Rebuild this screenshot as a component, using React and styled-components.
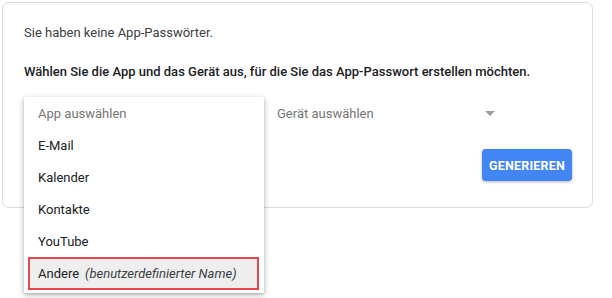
import React from "react";
import styled, { createGlobalStyle } from "styled-components";

const GlobalStyle = createGlobalStyle`
  html, body {
    margin: 0;
    min-height: 298px;
    background: #ffffff;
    font-family: Roboto, "Liberation Sans", Arial, sans-serif;
  }
  #root {
    min-height: 298px;
    overflow: visible;
  }
`;

const Page = styled.div`
  min-height: 298px;
  padding: 2px 0 0 2px;
  box-sizing: border-box;
`;

const Card = styled.div`
  box-sizing: border-box;
  width: 591px;
  height: 206px;
  padding: 20px 20px 0 21px;
  border: 1px solid #dadce0;
  border-radius: 7px;
  background: #fff;
`;

const Text = styled.p`
  margin: ${p => p.$top || 0}px 0 0;
  font-size: 13px;
  line-height: 20px;
  color: ${p => (p.$strong ? "#202124" : "#3c4043")};
  font-weight: ${p => (p.$strong ? 500 : 400)};
`;

const SelectRow = styled.div`
  position: relative;
  display: flex;
  align-items: center;
  gap: 13px;
  height: 32px;
  margin-top: 15px;
`;

const Select = styled.div`
  display: flex;
  align-items: center;
  justify-content: space-between;
  box-sizing: border-box;
  width: ${p => p.$width}px;
  height: 32px;
  padding: 0 5px 0 ${p => p.$padLeft || 0}px;
  font-size: 13px;
  color: #757575;
`;

const Arrow = styled.span`
  width: 0;
  height: 0;
  border-left: 5px solid transparent;
  border-right: 5px solid transparent;
  border-top: 5px solid #9e9e9e;
`;

const Menu = styled.ul`
  position: absolute;
  top: 0;
  left: 0;
  z-index: 2;
  box-sizing: border-box;
  width: 240px;
  margin: 0;
  padding: 0 0 3px;
  list-style: none;
  background: #fff;
  box-shadow: 0 2px 6px rgba(0, 0, 0, 0.28), 0 1px 2px rgba(0, 0, 0, 0.12);
`;

const Item = styled.li`
  box-sizing: border-box;
  display: flex;
  align-items: center;
  height: ${p => (p.$marked ? 33 : 32)}px;
  margin: ${p => (p.$marked ? "0 5px 0 4px" : "0")};
  padding-left: ${p => (p.$marked ? 8 : 14)}px;
  font-size: 13px;
  color: ${p => (p.$placeholder ? "#757575" : "#202124")};
  background: ${p => (p.$marked ? "#eeeeee" : "transparent")};
  border: ${p => (p.$marked ? "2px solid #e8474b" : "none")};
`;

const Hint = styled.i`
  margin-left: 6px;
  color: #3c4043;
`;

const ButtonRow = styled.div`
  display: flex;
  justify-content: flex-end;
  margin-top: 20px;
`;

const Button = styled.button`
  width: 90px;
  height: 32px;
  border: none;
  border-radius: 4px;
  background: #4285f4;
  color: #fff;
  font-family: inherit;
  font-size: 12.5px;
  font-weight: 700;
  letter-spacing: 0.2px;
  box-shadow: 0 1px 3px rgba(0, 0, 0, 0.3);
  padding: 0;
`;

const apps = ["E-Mail", "Kalender", "Kontakte", "YouTube"];

export default function App() {
  return (
    <Page>
      <GlobalStyle />
      <Card>
        <Text>Sie haben keine App-Passwörter.</Text>
        <Text $strong $top={19}>
          Wählen Sie die App und das Gerät aus, für die Sie das App-Passwort erstellen möchten.
        </Text>
        <SelectRow>
          <Select $width={240} $padLeft={14} />
          <Select $width={223}>
            Gerät auswählen
            <Arrow />
          </Select>
          <Menu>
            <Item $placeholder>App auswählen</Item>
            {apps.map(name => (
              <Item key={name}>{name}</Item>
            ))}
            <Item $marked>
              Andere<Hint>(benutzerdefinierter Name)</Hint>
            </Item>
          </Menu>
        </SelectRow>
        <ButtonRow>
          <Button>GENERIEREN</Button>
        </ButtonRow>
      </Card>
    </Page>
  );
}
